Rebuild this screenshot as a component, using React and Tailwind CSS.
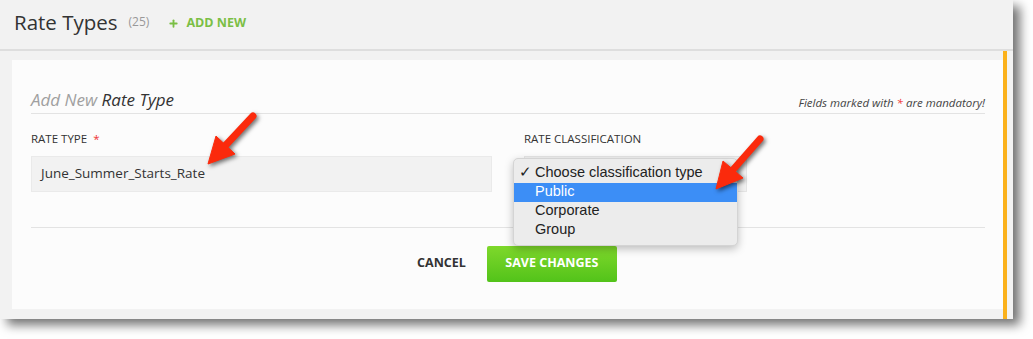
import { Plus } from "lucide-react";

const ui = { fontFamily: '"Open Sans", "Noto Sans", sans-serif' };
const sys = { fontFamily: '"Liberation Sans", Arial, sans-serif' };

const options = ["Choose classification type", "Public", "Corporate", "Group"];

function Arrows() {
  return (
    <svg
      className="absolute left-0 top-0 pointer-events-none"
      width="1033"
      height="339"
      style={{ filter: "drop-shadow(2px 2px 2px rgba(0,0,0,0.55))" }}
    >
      <g fill="#fb2a0c" stroke="#fb2a0c">
        <line x1="253" y1="116" x2="224" y2="147" strokeWidth="7" strokeLinecap="round" />
        <polygon points="208,164 235,154 216,136" strokeWidth="1" strokeLinejoin="round" />
        <line x1="760" y1="139" x2="731" y2="172" strokeWidth="7" strokeLinecap="round" />
        <polygon points="716,189 743,178 723,161" strokeWidth="1" strokeLinejoin="round" />
      </g>
    </svg>
  );
}

export default function App() {
  return (
    <div className="relative w-[1033px] h-[339px] bg-white overflow-hidden" style={ui}>
      <div className="w-[1013px] h-[319px] bg-[#f2f2f2] flex flex-col shadow-[7px_6px_10px_rgba(0,0,0,0.55)]">
        <div className="h-[51px] flex items-center pl-[14px] pb-[4px] border-b-2 border-[#dedede] shrink-0">
          <h1 className="text-[20.5px] text-[#333] leading-none">Rate Types</h1>
          <span className="ml-[11px] text-[12px] text-[#999] leading-none mt-[-2px]">(25)</span>
          <a className="ml-[19px] flex items-center gap-[7px] text-[12.5px] font-bold text-[#7bbf45] leading-none mt-[2px]">
            <Plus className="w-[11px] h-[11px]" strokeWidth={4} />
            ADD NEW
          </a>
        </div>

        <div className="flex flex-1">
          <div className="flex-1 pl-[12px] pt-[9px] pb-[10px]">
            <div className="h-full bg-[#fcfcfc] pl-[19px] pr-[18px]">
              <div className="h-[54px] flex items-end justify-between pb-[5px] border-b border-[#e3e3e3]">
                <h2 className="text-[17px] italic leading-none">
                  <span className="text-[#a0a0a0]">Add New </span>
                  <span className="text-[#333]">Rate Type</span>
                </h2>
                <p className="text-[11.5px] italic text-[#444] leading-none">
                  Fields marked with <span className="text-[#e33]">*</span> are mandatory!
                </p>
              </div>

              <div className="flex gap-[32px] pt-[19px] pb-[35px] border-b border-[#e3e3e3]">
                <div className="w-[461px]">
                  <label className="block text-[11.5px] text-[#333] leading-none uppercase">
                    Rate Type <span className="ml-[3px] text-[#e33]">*</span>
                  </label>
                  <div className="mt-[11px] h-[36px] bg-[#f2f2f2] border border-[#eaeaea] flex items-center pl-[9px] text-[13.5px] text-[#333]">
                    June_Summer_Starts_Rate
                  </div>
                </div>
                <div className="w-[223px]">
                  <label className="block text-[11.5px] text-[#333] leading-none uppercase">
                    Rate Classification
                  </label>
                  <div className="relative mt-[11px] h-[36px] bg-[#f2f2f2] border border-[#e6e6e6]">
                    <ul
                      className="absolute left-[-12px] top-[1px] w-[225px] py-[5px] bg-[#ececec] rounded-[5px] border border-[#d4d4d4] shadow-[0_3px_8px_rgba(0,0,0,0.25)] text-[14.5px] text-[#222]"
                      style={sys}
                    >
                      {options.map((o, i) => (
                        <li
                          key={o}
                          className={`h-[19px] flex items-center pl-[21px] relative ${i === 1 ? "bg-[#3c8ef6] text-white" : ""}`}
                        >
                          {i === 0 && <span className="absolute left-[5px]">✓</span>}
                          {o}
                        </li>
                      ))}
                    </ul>
                  </div>
                </div>
              </div>

              <div className="flex justify-center items-center gap-[21px] pt-[18px] pl-[18px]">
                <button className="text-[12.5px] font-bold text-[#333]">CANCEL</button>
                <button className="w-[130px] h-[36px] rounded-[2px] bg-gradient-to-b from-[#7ed82b] to-[#52c31a] text-white text-[12.5px] font-bold">
                  SAVE CHANGES
                </button>
              </div>
            </div>
          </div>
          <div className="w-[4px] bg-[#fbb11b]" />
          <div className="w-[6px]" />
        </div>
      </div>
      <Arrows />
    </div>
  );
}
